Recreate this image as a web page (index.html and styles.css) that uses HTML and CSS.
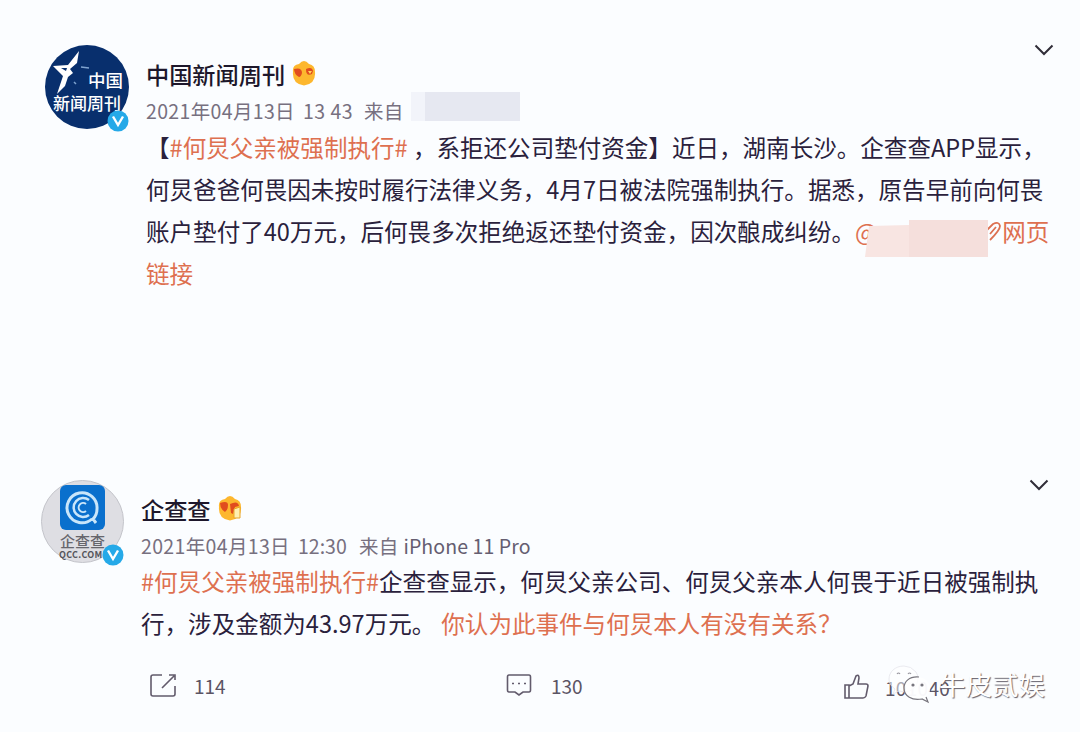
FILE: index.html
```
<!DOCTYPE html>
<html lang="zh-CN">
<head>
<meta charset="UTF-8">
<meta name="viewport" content="width=device-width, initial-scale=1.0">
<title>微博</title>
<link rel="stylesheet" href="styles.css">
</head>
<body>

<div class="post first">
    <div class="avatar">
        <svg width="84" height="84" viewBox="0 0 84 84">
            <circle cx="42" cy="42" r="42" fill="#082f6d"/>
            <path d="M34 6 L32 18 L25 24 L28 28 L23 32 L20 41 L12 49 L18 31 L8 21 L23 20 Z" fill="#fff"/>
            <path d="M16 23 L22 23 L21 26 Z" fill="#082f6d"/>
            <path d="M36 22 L44 23 M29 37 L31 39" stroke="#7fa3cf" stroke-width="1.5"/>
            <text x="43" y="42" class="logo-text big">中国</text>
            <text x="8" y="65" class="logo-text">新闻周刊</text>
        </svg>
        <svg class="vip" width="22" height="22" viewBox="0 0 22 22">
            <circle cx="11" cy="11" r="10.5" fill="#25a9e8"/>
            <path d="M6 6.500 L11 15 L16 6.500" fill="none" stroke="#fff" stroke-width="2.400"/>
        </svg>
    </div>
    <div class="main">
        <div class="name">中国新闻周刊
            <svg class="badge" width="24" height="26" viewBox="0 0 24 26">
                <path d="M7 4 Q12 -2 17 4 Q23 5 23 12 Q24 24 12 25.500 Q0 24 1 12 Q0 5 7 4" fill="#fdb72e"/>
                <path d="M2 9 Q10 7 10 13 Q9 17 7 17 Q2 14 2 9 M14 9 Q20 6 21 11 L20 14 Q14 17 14 9" fill="#e14c1e"/>
                <path d="M16 11 L20 11 L18 14 Z" fill="#ffd45c"/>
            </svg>
        </div>
        <div class="meta"><span class="date">2021年04月13日</span><span class="time">13 43</span>来自 <span class="mask"></span></div>
        <div class="text">
            <p>【<a>#何炅父亲被强制执行#</a> ，系拒还公司垫付资金】近日，湖南长沙。企查查APP显示，</p>
            <p>何炅爸爸何畏因未按时履行法律义务，4月7日被法院强制执行。据悉，原告早前向何畏</p>
            <p>账户垫付了40万元，后何畏多次拒绝返还垫付资金，因次酿成纠纷。<a class="mention">@<svg class="cover" width="124" height="42" viewBox="0 0 124 42"><path d="M4 6 L44 5 L44 0 L123 0 L123 37 L0 37 Z" fill="#f8e5e2"/><path d="M44 0 H123 V37 H44 Z" fill="#f5dfdc"/></svg><svg class="link" width="16" height="24" viewBox="0 0 16 24"><path d="M1 10 L7 4 Q13 1 14 6 Q14 10 4 20 M4 14 L10 7" fill="none" stroke="#dc7051" stroke-width="1.800"/></svg>网页</a></p>
            <p><a>链接</a></p>
        </div>
    </div>
    <svg class="arrow" width="20" height="12" viewBox="0 0 20 12"><path d="M1.500 1.500 L10 10 L18.500 1.500"/></svg>
</div>

<div class="post second">
    <div class="avatar">
        <svg width="83" height="83" viewBox="0 0 83 83">
            <circle cx="41.500" cy="41.500" r="41" fill="#dedee3" stroke="#c3c4ca"/>
            <rect x="19" y="5" width="45" height="45" rx="6" fill="#0a70cd"/>
            <g fill="none" stroke="#c9e6fa">
                <path d="M51 39 A15 15 0 1 1 56 29 Q56 35 52 39 L55 43" stroke-width="3"/>
                <path d="M48 20 A9.500 9.500 0 1 0 48 35" stroke-width="2.500"/>
                <path d="M45 24 A4.500 4.500 0 1 0 45 31" stroke-width="2"/>
            </g>
            <text x="19" y="67" class="logo-text gray">企查查</text>
            <text x="18" y="78" class="logo-text en">QCC.COM</text>
        </svg>
        <svg class="vip" width="22" height="22" viewBox="0 0 22 22">
            <circle cx="11" cy="11" r="10.500" fill="#25a9e8"/>
            <path d="M6 6.500 L11 15 L16 6.500" fill="none" stroke="#fff" stroke-width="2.400"/>
        </svg>
    </div>
    <div class="main">
        <div class="name">企查查
            <svg class="badge" width="24" height="26" viewBox="0 0 24 26">
                <path d="M7 4 Q12 -2 17 4 Q23 5 23 12 Q24 24 12 25.500 Q0 24 1 12 Q0 5 7 4" fill="#fdb72e"/>
                <path d="M2 8 Q10 5 10 10 Q10 15 7 17 Q2 14 2 8 M12 9 Q20 5 21 11 L17 12 L15 19 L13 18" fill="#e14c1e"/>
                <path d="M16 14 L22 12 V23 H16 Z" fill="#fff0b0" stroke="#e8a62a"/>
            </svg>
        </div>
        <div class="meta"><span class="date">2021年04月13日</span><span class="time">12:30</span>来自 <span class="phone">iPhone 11 Pro</span></div>
        <div class="text">
            <p><a>#何炅父亲被强制执行#</a>企查查显示，何炅父亲公司、何炅父亲本人何畏于近日被强制执</p>
            <p>行，涉及金额为43.97万元。<a class="ask">你认为此事件与何炅本人有没有关系？</a></p>
        </div>
        <div class="actions">
            <div class="share">
                <svg width="28" height="26" viewBox="0 0 28 26"><path d="M13 3 H4 Q2 3 2 5 V22 Q2 24 4 24 H24 Q26 24 26 22 V14 M13 16 L25 4 M20 3 H26 V8"/></svg>
                <span>114</span>
            </div>
            <div class="comment">
                <svg width="26" height="24" viewBox="0 0 26 24"><path d="M3 2 H23 Q24.500 2 24.500 4 V17 Q24.500 19 23 19 H17 L13 22 L9 19 H3 Q1.500 19 1.500 17 V4 Q1.500 2 3 2 M6 10.500 H8 M12 10.500 H14 M18 10.500 H20"/></svg>
                <span>130</span>
            </div>
            <div class="like">
                <svg width="27" height="26" viewBox="0 0 27 26"><path d="M2 11 H6 V24 H2 Z M6 12 L10 10 L13 2 Q16 0 16 4 L15 10 H23 Q25 10 25 12 L23 22 Q22 24 20 24 H6"/></svg>
                <span>10<i>10</i>40</span>
            </div>
        </div>
    </div>
    <svg class="arrow" width="20" height="12" viewBox="0 0 20 12"><path d="M1.500 1.500 L10 10 L18.500 1.500"/></svg>
</div>

<div class="watermark">
    <svg width="44" height="40" viewBox="0 0 44 40">
        <path d="M16 2 C7 2 1 8 1 15 C1 19 3 22 7 25 L5 30 L11 27 Q22 30 28 22 Q32 14 28 8 Q23 2 16 2" fill="#fff" fill-opacity="0.500" stroke="#e5e5eb" stroke-width="0.800"/>
        <path d="M29 13 C21 13 16 18 16 24 C16 32 24 37 34 35 L40 38 L38 33 Q43 29 42 23 C41 17 36 13 29 13" fill="#fff" fill-opacity="0.800"/>
        <path d="M31 13 C21 12 16 18 16 24 C16 32 24 37 34 35 L40 38 L38 33" fill="none" stroke="#77757d" stroke-width="1.200"/>
        <path d="M9 10 q1.500 -2 3 0 M20 10 q1.500 -2 3 0" fill="none" stroke="#99979f" stroke-width="1.200"/>
        <circle cx="25" cy="21" r="1.600" fill="#77757d"/>
        <circle cx="34" cy="21" r="1.600" fill="#77757d"/>
    </svg>
    <span>牛皮贰娱</span>
</div>

</body>
</html>
```
FILE: styles.css
```
* { box-sizing:border-box; }
body { margin:0; width:1080px; height:732px; overflow:hidden; position:relative; background:#fbfdff; color:#2a213c; font-family:"Noto Sans CJK SC",sans-serif; }
svg { display:block; flex:none; }
p { margin:0; }
a { color:#de7050; }
.post { display:flex; align-items:flex-start; }
.first { height:435px; padding:45px 26px 0 45px; }
.second { height:297px; padding:45px 31px 0 41px; }
.avatar { position:relative; width:84px; margin-right:17px; flex:none; }
.second .avatar { width:83px; }
.vip { position:absolute; right:0; bottom:-3px; }
.logo-text { font-size:17px; font-weight:500; fill:#fff; }
.logo-text.big { font-size:17.500px; }
.logo-text.gray { font-size:15px; fill:#66666c; }
.logo-text.en { font-size:9px; font-weight:700; fill:#55555b; letter-spacing:.3px; }
.main { width:870px; flex:none; }
.name { display:flex; align-items:center; gap:7px; height:34px; margin-top:12px; font-size:23.200px; font-weight:500; color:#1d172b; white-space:nowrap; }
.badge { position:relative; top:-1px; }
.meta { display:flex; align-items:center; height:38px; font-size:19.500px; letter-spacing:.35px; color:#77707f; white-space:pre; }
.date { width:157px; }
.time { width:61px; letter-spacing:.5px; }
.second .time { letter-spacing:0; }
.mask { width:109px; height:29px; margin:-7px 0 0 3px; background:linear-gradient(90deg,#f2f4fa 14px,#e6e8f1 14px); }
.phone { color:#655e71; letter-spacing:.1px; }
.text { margin-top:-3px; font-size:23.550px; line-height:42px; white-space:nowrap; }
.text p { height:42px; }
.second .text { margin-top:-4px; }
.mention { display:inline-block; position:relative; }
.cover { position:absolute; left:10px; top:10px; }
.link { display:inline-block; margin-left:109px; vertical-align:-3px; }
.arrow { margin-left:auto; margin-top:-1px; fill:none; stroke:#302d38; stroke-width:2; }
.ask { margin-left:6px; }
.actions { display:flex; height:42px; margin-top:22px; color:#5b5464; font-size:19px; }
.actions div { display:flex; align-items:center; height:38px; }
.actions svg { fill:none; stroke:#625b6c; stroke-width:1.600; }
.share { width:365px; padding-left:8px; gap:17px; }
.comment { width:337px; gap:19px; }
.like { gap:15px; padding-top:4px; }
.like span { letter-spacing:.3px; }
.like i { font-style:normal; color:#dddbe4; }
.watermark { position:absolute; left:888px; top:664px; display:flex; align-items:center; gap:7px; color:#fff; font-size:26.500px; line-height:40px; text-shadow:1px 1px 1px #65616c; }
```
